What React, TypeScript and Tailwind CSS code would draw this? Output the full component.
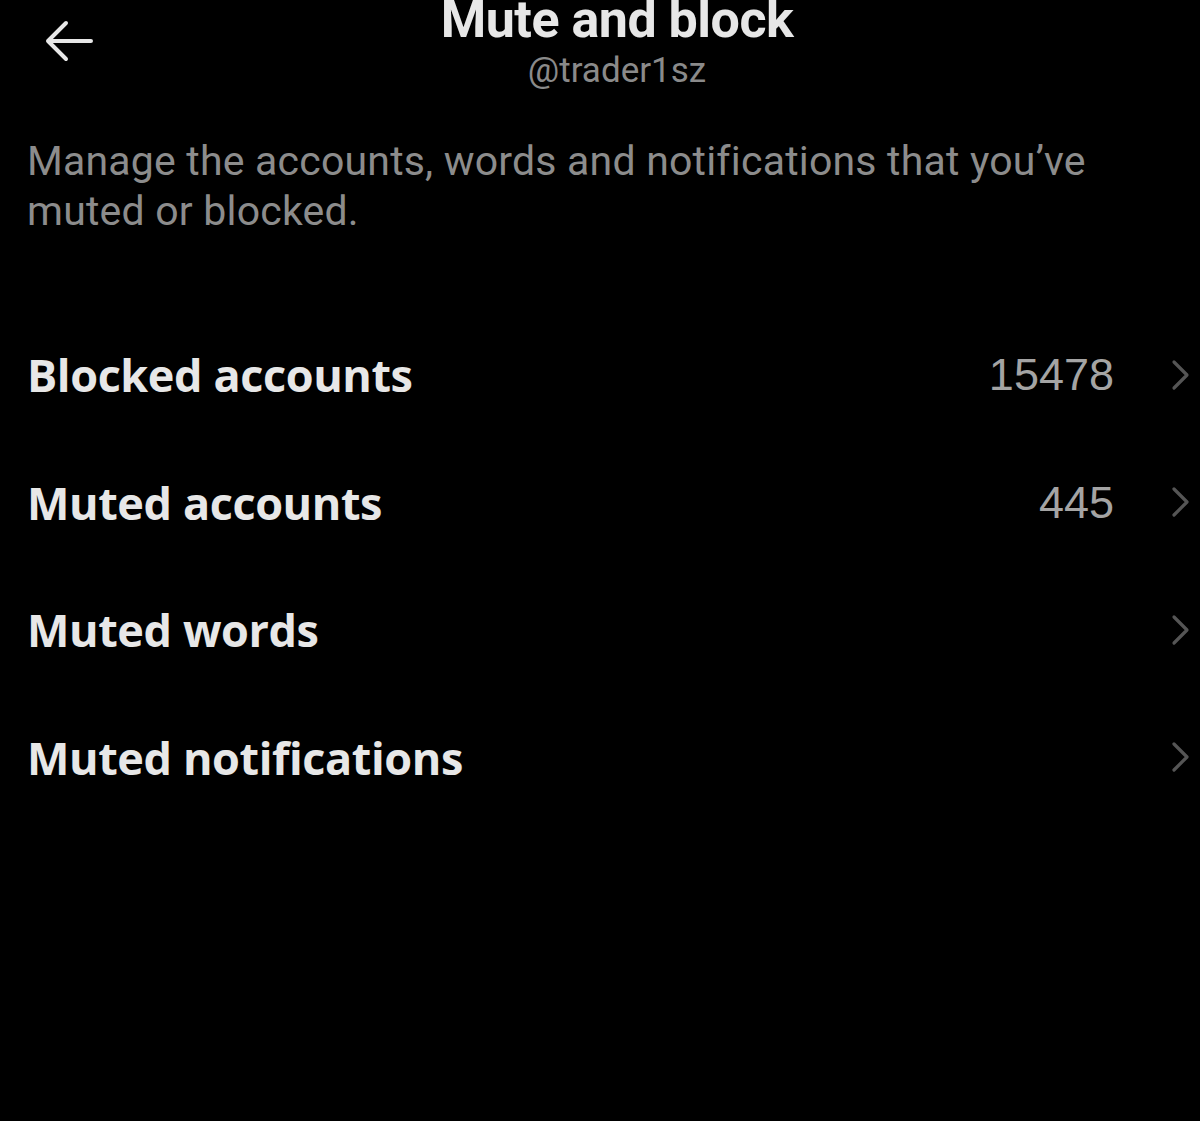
import React from "react";

const rows = [
  { label: "Blocked accounts", value: "15478" },
  { label: "Muted accounts", value: "445" },
  { label: "Muted words", value: "" },
  { label: "Muted notifications", value: "" },
];

function Chevron() {
  return (
    <svg width="22" height="32" viewBox="0 0 22 32" fill="none">
      <path d="M4 3 L17 16 L4 29" stroke="#555555" strokeWidth="3.2" strokeLinecap="round" strokeLinejoin="round" />
    </svg>
  );
}

export default function App() {
  return (
    <div className="w-[1200px] h-[1121px] bg-black overflow-hidden relative">
      <div className="relative h-[100px]">
        <div className="absolute left-[44px] top-[20px]">
          <svg width="50" height="42" viewBox="0 0 50 42" fill="none">
            <path d="M47 21 H4 M22 3 L4 21 L22 39" stroke="#e7e7e7" strokeWidth="4" strokeLinecap="round" strokeLinejoin="round" />
          </svg>
        </div>
        <div className="flex flex-col items-center pl-[34px]">
          <div className="text-[52px] leading-[40px] font-bold text-[#e7e7e7] tracking-[-0.5px] font-['Roboto',sans-serif]">Mute and block</div>
          <div className="mt-[11px] text-[35px] leading-[40px] text-[#8a8a8a] font-['Roboto',sans-serif]">@trader1sz</div>
        </div>
      </div>
      <div className="pl-[27px] w-[1140px] mt-[36px] text-[41px] leading-[50px] text-[#8c8c8c] font-['Roboto',sans-serif] tracking-[0.2px]">
        Manage the accounts, words and notifications that you’ve muted or blocked.
      </div>
      <div className="mt-[75px] flex flex-col">
        {rows.map((r) => (
          <div key={r.label} className="h-[127.5px] flex items-center pl-[27px] pr-[8px]">
            <div className="flex-1 text-[45px] font-bold text-[#e7e7e7] font-['Open_Sans',sans-serif] tracking-[-0.4px]">{r.label}</div>
            <div className="text-[45px] text-[#a4a4a4] font-['Liberation_Sans',sans-serif] mr-[56px]">{r.value}</div>
            <Chevron />
          </div>
        ))}
      </div>
    </div>
  );
}
